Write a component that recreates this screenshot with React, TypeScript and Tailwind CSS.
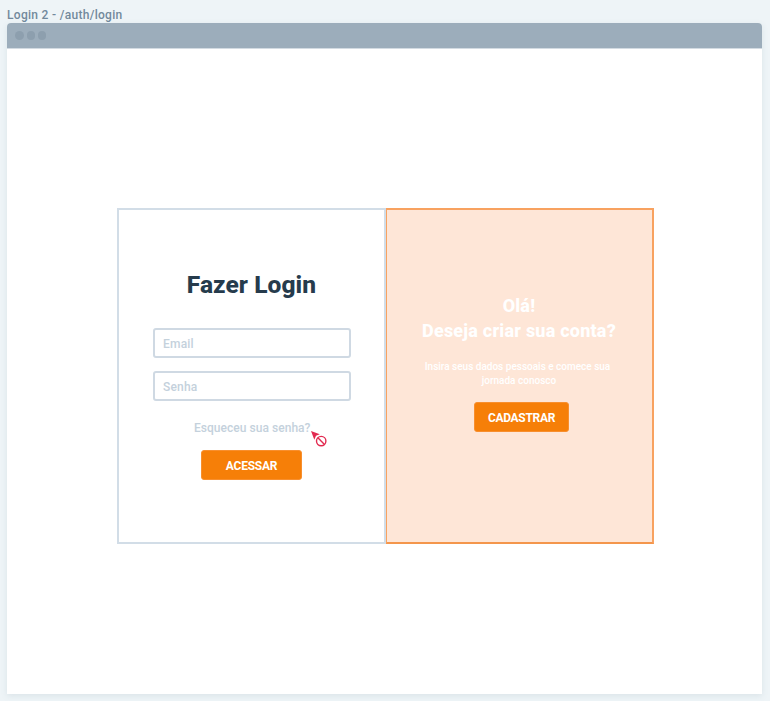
import React from 'react';

function Field({ label }: { label: string }) {
  return (
    <div className="flex h-[30px] w-[198px] items-center rounded-[3px] border-2 border-[#cfd9e3] bg-white pl-[8.5px] pt-px text-[12px] font-medium leading-none tracking-[0.2px] text-[#c4d1dc]">
      <span>{label}</span>
    </div>
  );
}

function BlockedCursor() {
  return (
    <svg className="absolute left-[192px] top-[221px] h-[18px] w-[18px]" viewBox="0 0 18 18" fill="none">
      <circle cx="10.2" cy="10.1" r="4.7" fill="white" stroke="#e22a50" strokeWidth="1.4" />
      <path d="m6.9 6.8 6.6 6.6" stroke="#e22a50" strokeWidth="1.4" />
      <path d="M0 0 8.8 3.2 5 4.8 3.3 8.8Z" fill="#e22a50" />
    </svg>
  );
}

export default function App() {
  return (
    <main className="flex h-[701px] w-[770px] flex-col bg-[#eef4f7] pl-[7px] font-['Roboto','Liberation_Sans',sans-serif]">
      <div className="h-[23px] whitespace-nowrap pt-[7px] text-[12px] font-medium leading-4 tracking-[0.3px] text-[#72899c]">
        <span>Login 2 - /auth/login</span>
      </div>
      <section className="flex h-[671px] w-[755px] flex-col rounded-t-[4px] bg-white shadow-[0_2px_6px_rgba(90,120,140,0.13)]">
        <header className="flex h-[25px] shrink-0 items-center gap-[2.8px] rounded-t-[4px] bg-[#9cadbb] pl-[8.4px]">
          <i className="h-[8.4px] w-[8.4px] rounded-full bg-[#8d9fae]" />
          <i className="h-[8.4px] w-[8.4px] rounded-full bg-[#8d9fae]" />
          <i className="h-[8.4px] w-[8.4px] rounded-full bg-[#8d9fae]" />
        </header>
        <div className="h-px shrink-0 bg-[#d3dbe2]" />
        <div className="ml-[110px] mt-[159px] flex h-[336px] w-[537px]">
          <div className="relative flex w-[269px] flex-col items-center border-2 border-[#d2dde7] pt-[60px]">
            <h1 className="whitespace-nowrap text-[24.5px] font-extrabold leading-[30px] tracking-[0.08px] text-[#263b4c]">Fazer Login</h1>
            <div className="mt-[28px] flex flex-col gap-[13px]">
              <Field label="Email" />
              <Field label="Senha" />
            </div>
            <div className="mt-[19px] whitespace-nowrap pl-[1.5px] text-[12px] font-medium leading-4 tracking-[0.04px] text-[#c4d1dc]">
              <span>Esqueceu sua senha?</span>
            </div>
            <button className="mt-[14px] h-[30px] w-[101px] rounded-[3px] border border-[#f88f2e] bg-[#f67f08] pt-px text-[12px] font-bold leading-none tracking-[-0.25px] text-white">
              <span>ACESSAR</span>
            </button>
            <BlockedCursor />
          </div>
          <div className="flex w-[268px] flex-col items-center border-2 border-l border-[#f8a260] border-b-[#f4964c] bg-[#fee6d7] pr-[2px] pt-[83px] text-white">
            <h2 className="whitespace-nowrap pl-px text-center text-[18px] font-extrabold leading-[25px] tracking-[0.22px]">
              <span>Olá!</span>
              <br />
              <span>Deseja criar sua conta?</span>
            </h2>
            <p className="mt-[17px] whitespace-nowrap pr-[2px] text-center text-[10px] font-medium leading-[14px]">
              <span>Insira seus dados pessoais e comece sua</span>
              <br />
              <span className="pl-[3px]">jornada conosco</span>
            </p>
            <button className="ml-[6px] mt-[14px] h-[30px] w-[95px] rounded-[3px] border border-[#f88f2e] bg-[#f67f08] pt-px text-[12px] font-bold leading-none tracking-[-0.3px]">
              <span>CADASTRAR</span>
            </button>
          </div>
        </div>
      </section>
    </main>
  );
}
